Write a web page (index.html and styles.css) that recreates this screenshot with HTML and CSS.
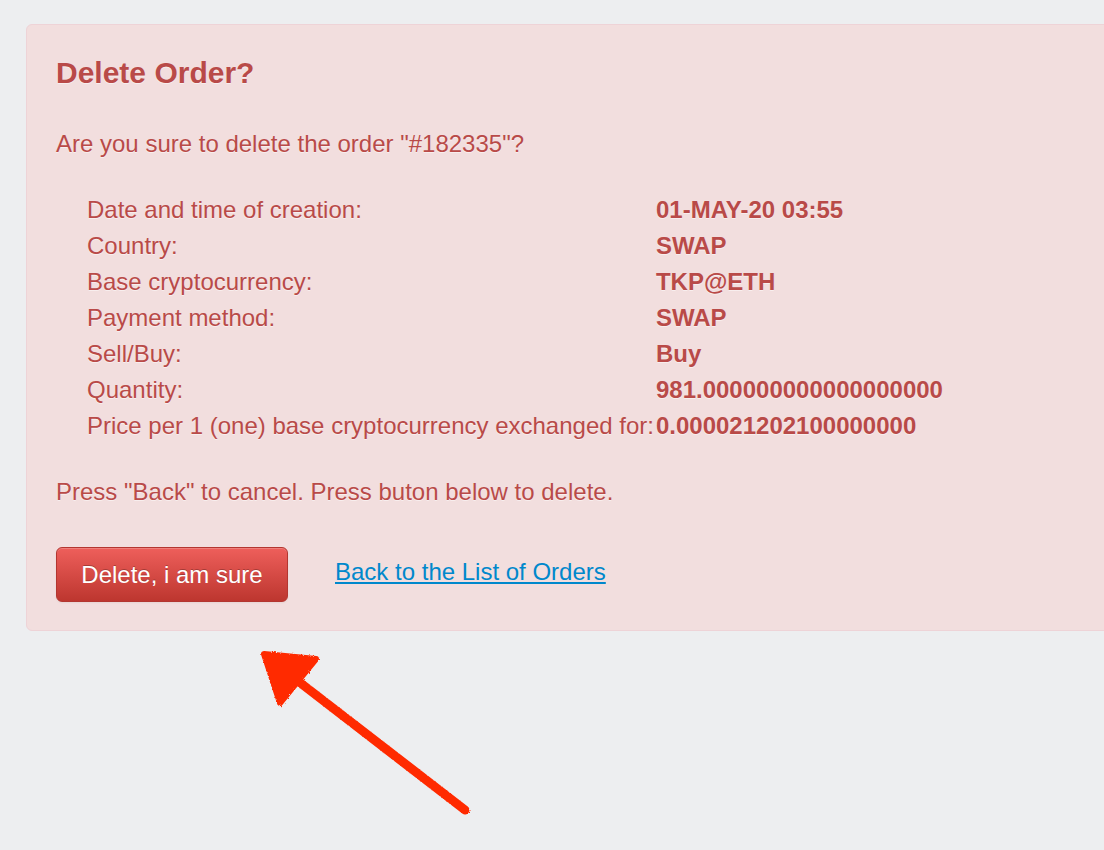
FILE: index.html
```html
<!DOCTYPE html>
<html>
<head>
<meta charset="utf-8">
<link rel="stylesheet" href="styles.css">
</head>
<body>
<div class="alert">
  <h1 class="title">Delete Order?</h1>
  <p class="lead">Are you sure to delete the order "#182335"?</p>
  <table class="details">
    <tr><td>Date and time of creation:</td><td class="val">01-MAY-20 03:55</td></tr>
    <tr><td>Country:</td><td class="val">SWAP</td></tr>
    <tr><td>Base cryptocurrency:</td><td class="val">TKP@ETH</td></tr>
    <tr><td>Payment method:</td><td class="val">SWAP</td></tr>
    <tr><td>Sell/Buy:</td><td class="val">Buy</td></tr>
    <tr><td>Quantity:</td><td class="val">981.000000000000000000</td></tr>
    <tr><td>Price per 1 (one) base cryptocurrency exchanged for:</td><td class="val">0.000021202100000000</td></tr>
  </table>
  <p class="note">Press "Back" to cancel. Press buton below to delete.</p>
  <div class="actions">
    <button class="btn-danger" type="button">Delete, i am sure</button>
    <a class="back" href="#">Back to the List of Orders</a>
  </div>
</div>
<svg class="arrow" width="240" height="190" viewBox="0 0 240 190">
  <defs>
    <filter id="rough" x="-10%" y="-10%" width="120%" height="120%">
      <feTurbulence type="fractalNoise" baseFrequency="0.9" numOctaves="2" result="n"/>
      <feDisplacementMap in="SourceGraphic" in2="n" scale="3"/>
    </filter>
  </defs>
  <g filter="url(#rough)">
    <path d="M229 174 L58 42" fill="none" stroke="#ff2a00" stroke-width="9" stroke-linecap="round"/>
    <path d="M28 18 L80 23 L44 67 Z" fill="#ff2a00" stroke="#ff2a00" stroke-width="6" stroke-linejoin="round"/>
  </g>
</svg>
</body>
</html>
```

FILE: styles.css
```css
html, body {
  margin: 0;
  padding: 0;
}
body {
  background: #edeef0;
  font-family: "Liberation Sans", Arial, Helvetica, sans-serif;
  position: relative;
  min-height: 850px;
  overflow: hidden;
}
.alert {
  margin: 24px -40px 0 26px;
  padding: 30px 29px 28px;
  background: #f2dede;
  border: 1px solid #eed3d7;
  border-radius: 6px;
  color: #b94a48;
  font-size: 24px;
  line-height: 36px;
  text-shadow: 0 1px 0 rgba(255, 255, 255, 0.5);
}
.title {
  margin: 0;
  font-size: 30px;
  line-height: 36px;
  font-weight: bold;
}
.lead {
  margin: 35px 0 0;
}
.details {
  margin: 30px 0 0 31px;
  border-collapse: collapse;
  border-spacing: 0;
}
.details td {
  padding: 0;
  height: 36px;
  white-space: nowrap;
  vertical-align: middle;
}
.details .val {
  font-weight: bold;
  padding-left: 2px;
}
.note {
  margin: 30px 0 0;
}
.actions {
  margin-top: 37px;
  display: flex;
  align-items: center;
  gap: 47px;
}
.btn-danger {
  width: 232px;
  height: 55px;
  padding: 0;
  border: 1px solid #b33630;
  border-radius: 6px;
  background: linear-gradient(#ee5f5b, #bd362f);
  color: #fff;
  font-family: inherit;
  font-size: 24px;
  text-shadow: 0 -1px 0 rgba(0, 0, 0, 0.25);
  box-shadow: inset 0 1px 0 rgba(255, 255, 255, 0.2), 0 1px 2px rgba(0, 0, 0, 0.05);
}
.back {
  color: #0088cc;
  text-decoration: underline;
  text-shadow: none;
  margin-bottom: 5px;
}
.arrow {
  position: absolute;
  left: 236px;
  top: 636px;
}
```
